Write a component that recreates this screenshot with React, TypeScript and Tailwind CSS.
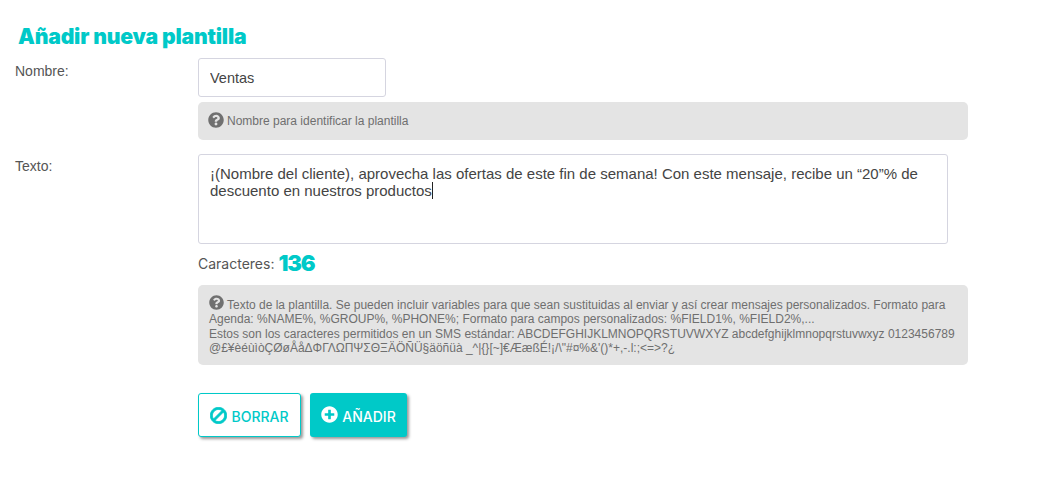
import {FaBan, FaPlusCircle, FaQuestionCircle} from 'react-icons/fa'

const sans = "font-['Liberation_Sans',Arial,sans-serif]"
const display = "font-['Inter','Liberation_Sans',sans-serif]"

const smsChars = "@£¥èéùìòÇØøÅåΔΦΓΛΩΠΨΣΘΞÄÖÑÜ§äöñüà _^|{}[~]€ÆæßÉ!¡/\\\"#¤%&'()*+,-.l:;<=>?¿"

export default function App() {
  return (
    <div className={`min-h-[488px] w-[1043px] bg-white text-[#555555] ${sans}`}>
      <div className="pl-[15px] pr-[75px] pt-[23px]">
        <h1 className={`pl-[3px] text-[21.2px] leading-[26px] font-black tracking-[-0.2px] text-[#00c9c8] ${display}`}>
          Añadir nueva plantilla
        </h1>

        <div className="mt-[9px] grid grid-cols-[183px_1fr]">
          <label className="pt-[3px] text-[14px] leading-[20px] text-[#555555]">Nombre:</label>
          <div>
            <input
              readOnly
              value="Ventas"
              className="block h-[39px] w-[188px] rounded-[3px] border border-[#d5d5e0] bg-white px-[11px] text-[14.5px] text-[#444444] outline-none"
            />
            <div className="mt-[5px] flex h-[38px] w-[770px] items-center gap-[3px] rounded-[5px] bg-[#e4e4e4] px-[10px] text-[12px] text-[#6f6f6f]">
              <FaQuestionCircle className="mb-[3px] size-[16px] shrink-0 text-[#707070]" />
              <span>Nombre para identificar la plantilla</span>
            </div>
          </div>
        </div>

        <div className="mt-[14px] grid grid-cols-[183px_1fr]">
          <label className="text-[14px] leading-[24px] text-[#555555]">Texto:</label>
          <div>
            <div className="h-[90px] w-[750px] rounded-[3px] border border-[#d5d5e0] bg-white px-[11px] pt-[10px] text-[15px] leading-[17px] text-[#444444]">
              ¡(Nombre del cliente), aprovecha las ofertas de este fin de semana! Con este mensaje, recibe un “20”% de descuento en nuestros productos
              <span className="inline-block h-[17px] w-px bg-[#222222] align-top" />
            </div>

            <div className={`mt-[4px] flex h-[29px] items-center gap-[4px] text-[14px] text-[#555555] ${display}`}>
              <span className="pt-[2px]">Caracteres:</span>
              <span className="text-[22px] leading-[26px] font-black tracking-[-1.2px] text-[#00c9c8]">136</span>
            </div>

            <div className="mt-[8px] h-[80px] w-[770px] rounded-[5px] bg-[#e4e4e4] px-[11px] pt-[10px] text-[12px] leading-[14.3px] text-[#6f6f6f]">
              <FaQuestionCircle className="mr-[3px] inline-block size-[15px] align-[-1px] text-[#707070]" />
              Texto de la plantilla. Se pueden incluir variables para que sean sustituidas al enviar y así crear mensajes personalizados. Formato para Agenda: %NAME%, %GROUP%, %PHONE%; Formato para campos personalizados: %FIELD1%, %FIELD2%,...
              <br />
              Estos son los caracteres permitidos en un SMS estándar: ABCDEFGHIJKLMNOPQRSTUVWXYZ abcdefghijklmnopqrstuvwxyz 0123456789 {smsChars}
            </div>

            <div className={`mt-[28px] flex gap-[9px] text-[14px] font-medium ${display}`}>
              <button
                type="button"
                className="flex h-[44px] w-[103px] items-center justify-center gap-[4px] rounded-[3px] border border-[#00c9c8] bg-white pt-[2px] text-[#00c9c8] shadow-[2px_2px_3px_rgba(0,0,0,0.4)]"
              >
                <FaBan className="mb-[2px] size-[17px] -scale-x-100 stroke-current stroke-[24]" />
                BORRAR
              </button>
              <button
                type="button"
                className="flex h-[44px] w-[97px] items-center justify-center gap-[4px] rounded-[3px] bg-[#00c9c8] pt-[2px] text-white shadow-[2px_2px_3px_rgba(0,0,0,0.4)]"
              >
                <FaPlusCircle className="mb-[4px] size-[17px]" />
                AÑADIR
              </button>
            </div>
          </div>
        </div>
      </div>
    </div>
  )
}
